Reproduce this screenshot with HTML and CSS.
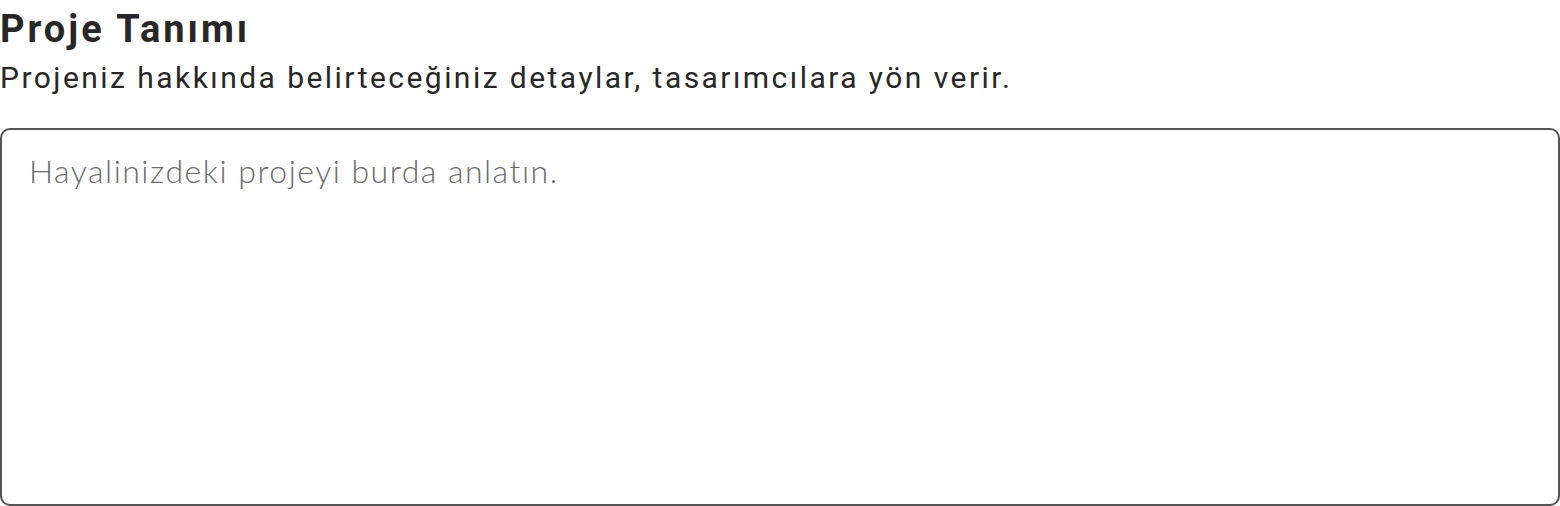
FILE: index.html
```html
<!DOCTYPE html>
<html lang="tr">
<head>
<meta charset="utf-8">
<link rel="stylesheet" href="styles.css">
</head>
<body>
<section class="field">
  <h2 class="title">Proje Tanımı</h2>
  <p class="subtitle">Projeniz hakkında belirteceğiniz detaylar, tasarımcılara yön verir.</p>
  <textarea class="box" placeholder="Hayalinizdeki projeyi burda anlatın."></textarea>
</section>
</body>
</html>
```
FILE: styles.css
```css
html, body {
  margin: 0;
  padding: 0;
  background: #fff;
}
.field {
  display: flex;
  flex-direction: column;
  width: 1560px;
}
.title {
  margin: 0;
  font-family: Roboto, "Liberation Sans", sans-serif;
  font-weight: 700;
  font-size: 38px;
  line-height: 58px;
  color: #272727;
  letter-spacing: 3px;
}
.subtitle {
  margin: 0;
  font-family: Roboto, "Liberation Sans", sans-serif;
  font-weight: 400;
  font-size: 30px;
  line-height: 40px;
  color: #272727;
  letter-spacing: 2.45px;
}
.box {
  margin-top: 30px;
  box-sizing: border-box;
  width: 1560px;
  height: 378px;
  border: 2px solid #555;
  border-radius: 10px;
  padding: 21px 27px;
  resize: none;
  font-family: Lato, "Liberation Sans", sans-serif;
  font-weight: 300;
  font-size: 32px;
  color: #272727;
  letter-spacing: 1.5px;
  outline: none;
}
.box::placeholder {
  color: #6a6a6a;
}
```
